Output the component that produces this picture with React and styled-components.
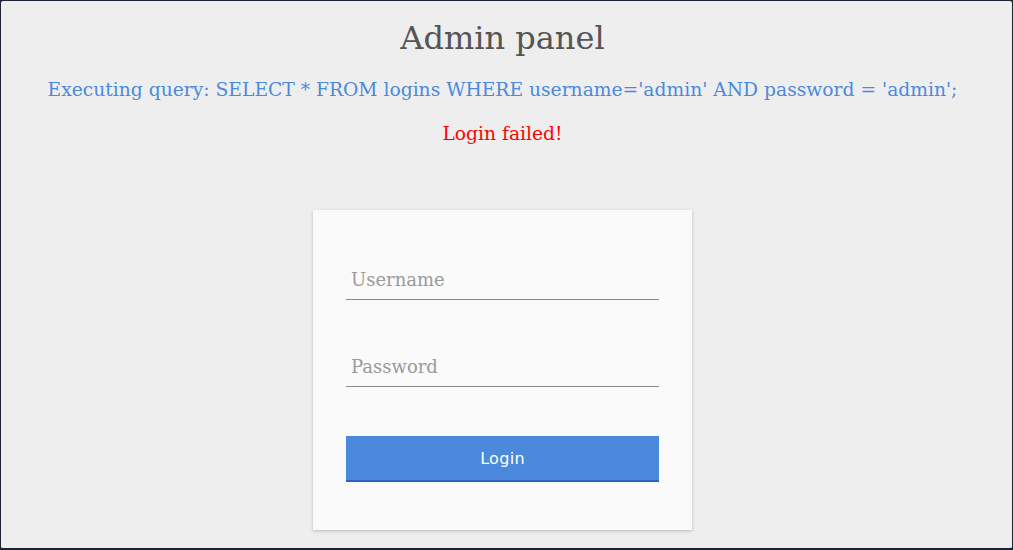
import React from "react";
import styled, { createGlobalStyle } from "styled-components";

const GlobalStyle = createGlobalStyle`
    html, body {
        margin: 0;
        padding: 0;
        background: #1c2333;
    }
`

const Page = styled.div`
    box-sizing: border-box;
    height: 550px;
    width: 1013px;
    background: #eeeeee;
    border: 1px solid #1c2333;
    border-bottom-width: 2px;
    border-radius: 3px;
    padding: 17px 8px 0 0;

    display: flex;
    flex-direction: column;
    align-items: center;

    font-family: "DejaVu Serif", serif;
`

const Title = styled.h1`
    margin: 0;
    font-size: 32px;
    line-height: 40px;
    font-weight: normal;
    color: #555555;
`

const Message = styled.p`
    margin: ${p => p.$top}px 0 0;
    font-size: 18.7px;
    line-height: 24px;
    color: ${p => p.$color};
`

const Card = styled.form`
    box-sizing: border-box;
    width: 379px;
    margin-top: 64px;
    padding: 53px 33px 48px;
    background: #fafafa;
    box-shadow: 0 1px 3px rgba(0, 0, 0, 0.22);

    display: flex;
    flex-direction: column;
    gap: 50px;
`

const Input = styled.input`
    box-sizing: border-box;
    width: 100%;
    height: 37px;
    padding: 0 5px 4px;
    border: none;
    border-bottom: 1px solid #8a8a8a;
    background: transparent;
    outline: none;

    font-family: "DejaVu Serif", serif;
    font-size: 18px;
    color: #333;

    &::placeholder {
        color: #9a9a9a;
    }
`

const Button = styled.button`
    box-sizing: border-box;
    width: 100%;
    height: 46px;
    margin-top: -1px;
    border: none;
    border-bottom: 2px solid #2f62bd;
    background: #4a89dc;
    color: #ffffff;

    font-family: "DejaVu Sans", sans-serif;
    font-size: 16px;
    letter-spacing: 0.3px;
    cursor: pointer;
`

export default function App() {
    return (
        <>
            <GlobalStyle />
            <Page>
                <Title>Admin panel</Title>
                <Message $top={20} $color="#4a89dc">
                    Executing query: SELECT * FROM logins WHERE username='admin' AND password = 'admin';
                </Message>
                <Message $top={20} $color="#ff0000">Login failed!</Message>

                <Card onSubmit={e => e.preventDefault()}>
                    <Input type="text" placeholder="Username" />
                    <Input type="password" placeholder="Password" />
                    <Button type="submit">Login</Button>
                </Card>
            </Page>
        </>
    )
}
